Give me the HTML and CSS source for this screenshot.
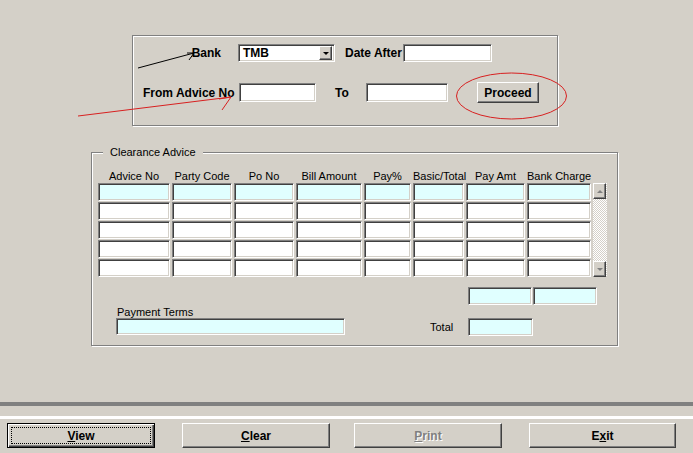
FILE: index.html
```html
<!DOCTYPE html>
<html lang="en">
<head>
  <meta charset="UTF-8" />
  <title>Clearance Advice</title>
  <link rel="stylesheet" href="styles.css">
</head>
<body>
  <div class="form">
    <div class="box search-box">
      <div class="row row-bank">
        <span class="label lbl-bank">Bank</span>
        <div class="field combo">
          <span class="combo-text">TMB</span>
          <span class="combo-btn"><span class="arrow-down"></span></span>
        </div>
        <span class="label lbl-date">Date After</span>
        <div class="field fld-date"></div>
      </div>
      <div class="row row-advice">
        <span class="label lbl-from">From Advice No</span>
        <div class="field fld-from"></div>
        <span class="label lbl-to">To</span>
        <div class="field fld-to"></div>
        <button class="btn btn-proceed">Proceed</button>
      </div>
    </div>

    <div class="box advice-box">
      <span class="box-title">Clearance Advice</span>
      <div class="grid">
        <span class="col-head">Advice No</span>
        <span class="col-head">Party Code</span>
        <span class="col-head">Po No</span>
        <span class="col-head">Bill Amount</span>
        <span class="col-head">Pay%</span>
        <span class="col-head">Basic/Total</span>
        <span class="col-head">Pay Amt</span>
        <span class="col-head">Bank Charge</span>
        <span></span>

        <div class="scroll">
          <span class="scroll-btn"><span class="arrow-up"></span></span>
          <span class="scroll-btn"><span class="arrow-down grey"></span></span>
        </div>

        <div class="field cell cyan"></div><div class="field cell cyan"></div><div class="field cell cyan"></div><div class="field cell cyan"></div>
        <div class="field cell cyan"></div><div class="field cell cyan"></div><div class="field cell cyan"></div><div class="field cell cyan"></div>

        <div class="field cell"></div><div class="field cell"></div><div class="field cell"></div><div class="field cell"></div>
        <div class="field cell"></div><div class="field cell"></div><div class="field cell"></div><div class="field cell"></div>

        <div class="field cell"></div><div class="field cell"></div><div class="field cell"></div><div class="field cell"></div>
        <div class="field cell"></div><div class="field cell"></div><div class="field cell"></div><div class="field cell"></div>

        <div class="field cell"></div><div class="field cell"></div><div class="field cell"></div><div class="field cell"></div>
        <div class="field cell"></div><div class="field cell"></div><div class="field cell"></div><div class="field cell"></div>

        <div class="field cell"></div><div class="field cell"></div><div class="field cell"></div><div class="field cell"></div>
        <div class="field cell"></div><div class="field cell"></div><div class="field cell"></div><div class="field cell"></div>
      </div>

      <div class="totals-row">
        <div class="field cyan sum-box"></div>
        <div class="field cyan sum-box"></div>
      </div>

      <div class="footer-row">
        <div class="terms">
          <div class="lbl-terms">Payment Terms</div>
          <div class="field cyan fld-terms"></div>
        </div>
        <div class="total">
          <span class="lbl-total">Total</span>
          <div class="field cyan fld-total"></div>
        </div>
      </div>
    </div>
  </div>

  <div class="sep-dark"></div>
  <div class="sep-light"></div>

  <div class="actions">
    <button class="btn btn-action btn-default"><u>V</u>iew</button>
    <button class="btn btn-action btn-clear"><u>C</u>lear</button>
    <button class="btn btn-action btn-print" disabled><u>P</u>rint</button>
    <button class="btn btn-action btn-exit">E<u>x</u>it</button>
  </div>

  <!-- hand-drawn marks on top of the screenshot -->
  <svg class="marks" width="693" height="453" viewBox="0 0 693 453">
    <path d="M138 68 L194 53 M187 53 H194 L189 60" stroke="#000" stroke-width="1" fill="none" />
    <path d="M78 116 L231 97 M222 110 L231 97 M219 99 L231 97" stroke="#d82020" stroke-width="1" fill="none" />
    <ellipse cx="511.5" cy="96" rx="55" ry="23" stroke="#d82020" stroke-width="1" fill="none" />
  </svg>
</body>
</html>
```

FILE: styles.css
```css
* { box-sizing: border-box; }

body {
  margin: 0;
  width: 693px;
  height: 453px;
  overflow: hidden;
  position: relative;
  background: #d4d0c8;
  font-family: "Liberation Sans", Arial, sans-serif;
  font-size: 11px;
  color: #000;
}

.form {
  height: 402px;
  padding-top: 35px;
}

/* etched group box */
.box {
  position: relative;
  border: 1px solid #808080;
  box-shadow: inset 1px 1px #fff, 1px 1px #fff;
}
.box-title {
  position: absolute;
  top: -7px;
  left: 11px;
  padding: 0 7px;
  line-height: 13px;
  background: #d4d0c8;
}

/* sunken field */
.field {
  background: #fff;
  border: 1px solid;
  border-color: #808080 #fff #fff #808080;
  box-shadow: inset 1px 1px #404040, inset -1px -1px #d4d0c8;
}
.cyan { background: #e0ffff; }

/* raised button */
.btn {
  position: relative;
  padding: 0;
  font-family: "Liberation Sans", Arial, sans-serif;
  font-size: 12px;
  font-weight: bold;
  color: #000;
  background: #d4d0c8;
  border: 1px solid;
  border-color: #fff #404040 #404040 #fff;
  box-shadow: inset -1px -1px #808080;
}

.label {
  font-size: 12px;
  font-weight: bold;
  white-space: nowrap;
}

/* search box */
.search-box {
  margin-left: 132px;
  width: 426px;
  height: 91px;
  padding-top: 8px;
}
.row {
  display: flex;
  align-items: center;
}
.row-bank { height: 18px; }
.row-advice { height: 21px; margin-top: 20px; }

.lbl-bank { width: 105px; padding-right: 17px; text-align: right; }
.combo {
  display: flex;
  align-items: center;
  width: 97px;
  height: 18px;
  padding: 2px;
}
.combo-text {
  padding-left: 2px;
  font-size: 12px;
  font-weight: bold;
}
.combo-btn {
  display: flex;
  align-items: center;
  justify-content: center;
  margin-left: auto;
  width: 13px;
  height: 14px;
  background: #d4d0c8;
  border: 1px solid;
  border-color: #fff #404040 #404040 #fff;
  box-shadow: inset -1px -1px #808080;
}
.lbl-date { margin-left: 10px; width: 58px; }
.fld-date { width: 89px; height: 18px; }

.lbl-from { margin-left: 10px; width: 96px; }
.fld-from { width: 77px; height: 19px; }
.lbl-to { margin-left: 19px; width: 31px; }
.fld-to { width: 82px; height: 19px; }
.btn-proceed { margin-left: 29px; width: 62px; height: 21px; }

.arrow-down,
.arrow-up {
  width: 0;
  height: 0;
  border-left: 3px solid transparent;
  border-right: 3px solid transparent;
}
.arrow-down { border-top: 3px solid #000; }
.arrow-up { border-bottom: 3px solid #808080; }
.arrow-down.grey { border-top-color: #808080; }

/* clearance advice */
.advice-box {
  margin-top: 26px;
  margin-left: 91px;
  width: 527px;
  height: 194px;
  padding: 18px 0 0 6px;
}
.grid {
  display: grid;
  grid-template-columns: 72px 60px 60px 66px 47px 51px 59px 64px 14px;
  grid-template-rows: 11px repeat(5, 18px);
  column-gap: 2px;
  row-gap: 1px;
}
.col-head {
  text-align: center;
  line-height: 11px;
  white-space: nowrap;
}
.scroll {
  grid-column: 9;
  grid-row: 2 / 7;
  display: flex;
  flex-direction: column;
  justify-content: space-between;
  background: repeating-conic-gradient(#fff 0 25%, #d4d0c8 0 50%) 0 0 / 2px 2px;
}
.scroll-btn {
  display: flex;
  align-items: center;
  justify-content: center;
  height: 16px;
  width: 13px;
  background: #d4d0c8;
  border: 1px solid;
  border-color: #fff #404040 #404040 #fff;
  box-shadow: inset -1px -1px #808080;
}

.totals-row {
  display: flex;
  gap: 1px;
  margin: 10px 0 0 370px;
}
.sum-box { width: 64px; height: 18px; }

.footer-row {
  display: flex;
  margin-top: 1px;
}
.terms { margin-left: 18px; width: 229px; }
.lbl-terms { line-height: 12px; padding-left: 1px; }
.fld-terms { height: 17px; }
.total {
  display: flex;
  align-items: center;
  margin: 12px 0 0 85px;
}
.lbl-total { width: 38px; }
.fld-total { width: 65px; height: 18px; }

/* bottom bar */
.sep-dark {
  height: 4px;
  background: #808080;
}
.sep-light {
  height: 3px;
  margin-top: 10px;
  background: #fff;
}
.actions {
  display: flex;
  padding: 4px 0 0 7px;
}
.btn-action { width: 148px; height: 25px; }
.btn-clear { margin-left: 27px; }
.btn-print { margin-left: 24px; color: #808080; text-shadow: 1px 1px #fff; }
.btn-exit { margin-left: 27px; width: 147px; }

.btn-default {
  border: 1px solid #000;
  box-shadow: inset 1px 1px #fff, inset -1px -1px #404040, inset -2px -2px #808080;
}
.btn-default::after {
  content: "";
  position: absolute;
  inset: 3px;
  border: 1px dotted #000;
}

.marks {
  position: absolute;
  top: 0;
  left: 0;
  pointer-events: none;
}
```
